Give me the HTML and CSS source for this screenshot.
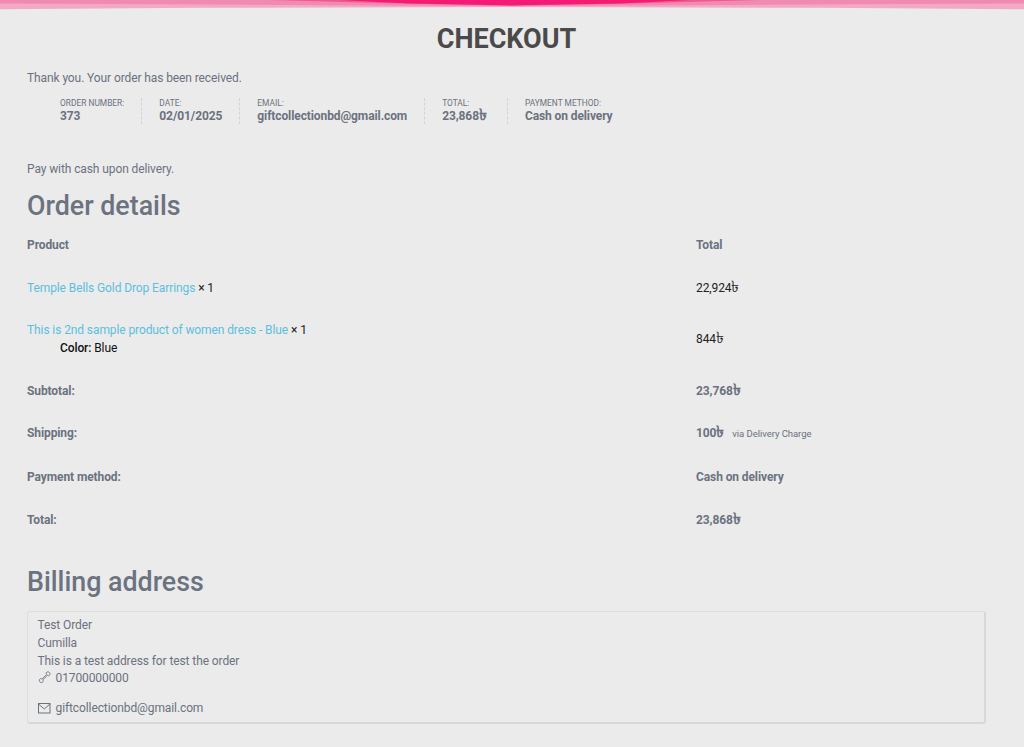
FILE: index.html
```html
<!DOCTYPE html>
<html lang="en">
<head>
<meta charset="utf-8">
<title>Checkout</title>
<link rel="stylesheet" href="styles.css">
</head>
<body>
<div class="topbar" aria-hidden="true">
  <svg class="topbar-art" viewBox="0 0 1024 10" preserveAspectRatio="none">
    <polygon points="0,0 1024,0 1024,9.300 820,7.800 512,7.100 200,7.800 0,9.300" fill="#f2a9c5"/>
    <polygon points="0,0 1024,0 1024,3.500 800,4.500 512,6.200 220,4.500 0,3.500" fill="#f08ab0"/>
    <polygon points="270,0 760,0 650,3 512,5.800 380,3" fill="#f2588f"/>
    <polygon points="340,0 690,0 620,3.400 512,5.300 410,3.400" fill="#f31b72"/>
  </svg>
</div>
<main class="page">
  <h1 class="title">CHECKOUT</h1>
  <p class="thanks">Thank you. Your order has been received.</p>
  <ul class="overview">
    <li class="ov-item"><span class="ov-label">ORDER NUMBER:</span><strong class="ov-value">373</strong></li>
    <li class="ov-item"><span class="ov-label">DATE:</span><strong class="ov-value">02/01/2025</strong></li>
    <li class="ov-item"><span class="ov-label">EMAIL:</span><strong class="ov-value">giftcollectionbd@gmail.com</strong></li>
    <li class="ov-item"><span class="ov-label">TOTAL:</span><strong class="ov-value">23,868<span class="cur">৳</span></strong></li>
    <li class="ov-item"><span class="ov-label">PAYMENT METHOD:</span><strong class="ov-value">Cash on delivery</strong></li>
  </ul>
  <p class="pay-note">Pay with cash upon delivery.</p>
  <h2 class="section-title">Order details</h2>
  <table class="details">
    <thead>
      <tr><th>Product</th><th>Total</th></tr>
    </thead>
    <tbody>
      <tr class="item"><td><a href="#">Temple Bells Gold Drop Earrings</a> <strong class="qty">× 1</strong></td><td>22,924<span class="cur">৳</span></td></tr>
      <tr class="item"><td><a href="#">This is 2nd sample product of women dress - Blue</a> <strong class="qty">× 1</strong>
        <div class="meta"><strong>Color:</strong> Blue</div></td><td>844<span class="cur">৳</span></td></tr>
    </tbody>
    <tfoot>
      <tr class="subtotal"><th>Subtotal:</th><th>23,768<span class="cur">৳</span></th></tr>
      <tr><th>Shipping:</th><th>100<span class="cur">৳</span> <small class="via">via Delivery Charge</small></th></tr>
      <tr><th>Payment method:</th><th>Cash on delivery</th></tr>
      <tr class="grand"><th>Total:</th><th>23,868<span class="cur">৳</span></th></tr>
    </tfoot>
  </table>
  <h2 class="section-title billing">Billing address</h2>
  <address class="address">
    <div>Test Order</div>
    <div>Cumilla</div>
    <div>This is a test address for test the order</div>
    <div class="contact phone">
      <svg class="icon" viewBox="0 0 14 14" fill="none" stroke="#6b7280" stroke-width="0.9"><path d="M8.200 1.800C9 .6 10.600 .6 11.400 1.400c.9.9.9 2.400-.2 3.200-.6.400-1.200 0-1.700-.4L4.700 9c.4.500.8 1.100.4 1.700-.8 1.100-2.300 1.100-3.200.2C1 10 1 8.500 2.200 7.700c.6-.4 1.200 0 1.700.5l4.800-4.800c-.4-.5-.8-1-.5-1.600Z"/></svg>
      <span>01700000000</span>
    </div>
    <div class="contact email">
      <svg class="icon" viewBox="0 0 14 14" fill="none" stroke="#6b7280" stroke-width="1"><rect x=".5" y="2.500" width="11.500" height="9.500"/><path d="m.5 3 5.750 5L12 3"/></svg>
      <span>giftcollectionbd@gmail.com</span>
    </div>
  </address>
</main>
</body>
</html>
```

FILE: styles.css
```css
* { box-sizing: border-box; }
html, body { margin: 0; padding: 0; }
body {
  background: #ebebeb;
  color: #6b7280;
  font-family: Roboto, "Noto Sans", "DejaVu Sans", sans-serif;
  font-size: 12px;
  letter-spacing: -0.1px;
  line-height: 18px;
  height: 747px;
  overflow: hidden;
}
.topbar { height: 10px; }
.topbar-art { display: block; width: 100%; height: 10px; }
.page { padding: 0 38px 0 27px; }
.title {
  margin: 14px 0 0;
  font-size: 27px;
  line-height: 30px;
  font-weight: 700;
  letter-spacing: 0;
  color: #4a4a4a;
  text-align: center;
}
.thanks { margin: 15px 0 0; }
.overview {
  display: flex;
  list-style: none;
  margin: 11px 0 0;
  padding: 0 0 0 33px;
}
.ov-item {
  display: flex;
  flex-direction: column;
  padding-right: 17px;
  margin-right: 17px;
  border-right: 1px dashed #d3d3de;
}
.ov-item:last-child { border-right: 0; }
.ov-label { font-size: 8.400px; line-height: 11px; letter-spacing: 0; text-transform: uppercase; }
.ov-value { font-size: 12px; line-height: 15px; font-weight: 700; }
.cur { font-size: 16px; line-height: 0; letter-spacing: 0; margin-right: 3px; }
.pay-note { margin: 36px 0 0; }
.section-title {
  margin: 10px 0 0;
  font-size: 26.800px;
  line-height: 36px;
  letter-spacing: 0;
  font-weight: 500;
  color: #6b7280;
}
.details {
  width: 100%;
  border-collapse: collapse;
  margin-top: -1px;
  table-layout: fixed;
}
.details th, .details td {
  text-align: left;
  padding: 12.450px 0;
  font-size: 12px;
  line-height: 18px;
  vertical-align: middle;
}
.details thead th { padding-top: 13.450px; }
.details .item:first-child td { padding-bottom: 11.450px; }
.details .subtotal th { padding-bottom: 11.450px; }
.details .grand th { padding-bottom: 13.450px; }
.details th { font-weight: 700; }
.details th:first-child, .details td:first-child { width: 669px; }
.details td { color: #222; }
.details a { color: #5bc0de; text-decoration: none; }
.qty { font-weight: 400; color: #222; }
.meta { padding-left: 33px; color: #111; }
.meta strong { font-weight: 500; }
.via { font-size: 9.500px; font-weight: 400; letter-spacing: -0.05px; margin-left: 2px; }
.billing { margin-top: 22px; }
.address {
  margin-top: 11px;
  font-style: normal;
  padding: 4px 9.500px 5px;
  border: 1px solid #dedede;
  border-right: 2px solid #d8d8d8;
  border-bottom: 2px solid #d8d8d8;
  border-radius: 3px;
}
.contact { display: flex; align-items: center; gap: 4px; }
.phone { margin-top: -1px; }
.email { margin-top: 12px; }
.icon { width: 14px; height: 14px; flex: none; }
```
